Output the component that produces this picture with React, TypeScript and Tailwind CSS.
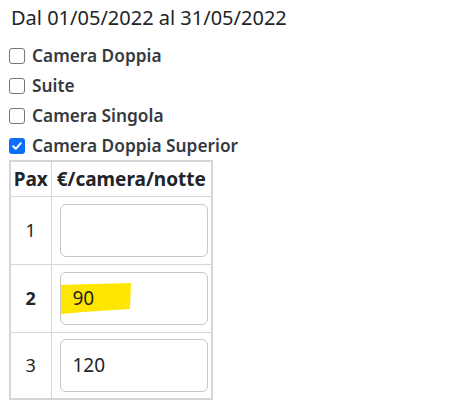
import React from "react";

const font = { fontFamily: '"Noto Sans", "Open Sans", Arial, sans-serif' };

function Box({ checked }: { checked?: boolean }) {
  return checked ? (
    <span className="flex h-[16px] w-[16px] items-center justify-center rounded-[3px] bg-[#0d6efd]">
      <svg width="12" height="12" viewBox="0 0 12 12">
        <path d="M2.2 6.3 L4.8 8.8 L9.8 3.2" fill="none" stroke="#fff" strokeWidth="2" strokeLinecap="round" strokeLinejoin="round" />
      </svg>
    </span>
  ) : (
    <span className="block h-[16px] w-[16px] rounded-[3px] border border-[#767676] bg-white" />
  );
}

const rooms = [
  { name: "Camera Doppia", checked: false },
  { name: "Suite", checked: false },
  { name: "Camera Singola", checked: false },
  { name: "Camera Doppia Superior", checked: true },
];

export default function App() {
  return (
    <div className="h-[409px] w-[454px] bg-white pl-[9px] text-[#212529]" style={font}>
      <div className="flex h-[41px] items-start pl-[2px] pt-[4px] text-[20px] leading-[27px] text-[#212529]">
        Dal 01/05/2022 al 31/05/2022
      </div>
      {rooms.map((r) => (
        <div key={r.name} className="flex h-[30px] items-center gap-[7px]">
          <Box checked={r.checked} />
          <span className="text-[17.3px] font-semibold text-[#343a40]">{r.name}</span>
        </div>
      ))}
      <table className="-mt-[1px] border-collapse border-2 border-[#d3d6db]">
        <thead>
          <tr className="h-[35px]">
            <th className="w-[41px] border border-[#d3d6db] p-0 text-center text-[19px] leading-[24px] font-bold text-[#212529]">Pax</th>
            <th className="w-[161px] border border-[#d3d6db] p-0 text-center text-[19px] leading-[24px] font-bold text-[#212529]">€/camera/notte</th>
          </tr>
        </thead>
        <tbody>
          <tr className="h-[68px]">
            <td className="border border-[#d3d6db] p-0 text-center text-[18px] text-[#212529]">1</td>
            <td className="border border-[#d3d6db] py-0 pl-[8px] pr-0">
              <div className="h-[53px] w-[148px] rounded-[6px] border border-[#c6c6c6] bg-white" />
            </td>
          </tr>
          <tr className="h-[68px]">
            <td className="border border-[#d3d6db] p-0 text-center text-[18px] font-bold text-[#212529]">2</td>
            <td className="border border-[#d3d6db] py-0 pl-[8px] pr-0">
              <div className="relative flex h-[53px] w-[148px] items-center rounded-[6px] border border-[#c6c6c6] bg-white pl-[12px] text-[19px] text-[#212529]">
                <svg className="absolute left-0 top-[10px]" width="72" height="32" viewBox="0 0 72 32">
                  <path d="M0 2 C20 1 45 1 70 0 L69 26 C48 27 22 29 0 31 Z" fill="#ffe600" />
                </svg>
                <span className="relative">90</span>
              </div>
            </td>
          </tr>
          <tr className="h-[67px]">
            <td className="border border-[#d3d6db] p-0 text-center text-[18px] text-[#212529]">3</td>
            <td className="border border-[#d3d6db] py-0 pl-[8px] pr-0">
              <div className="flex h-[53px] w-[148px] items-center rounded-[6px] border border-[#c6c6c6] bg-white pl-[12px] text-[19px] text-[#212529]">
                120
              </div>
            </td>
          </tr>
        </tbody>
      </table>
    </div>
  );
}
